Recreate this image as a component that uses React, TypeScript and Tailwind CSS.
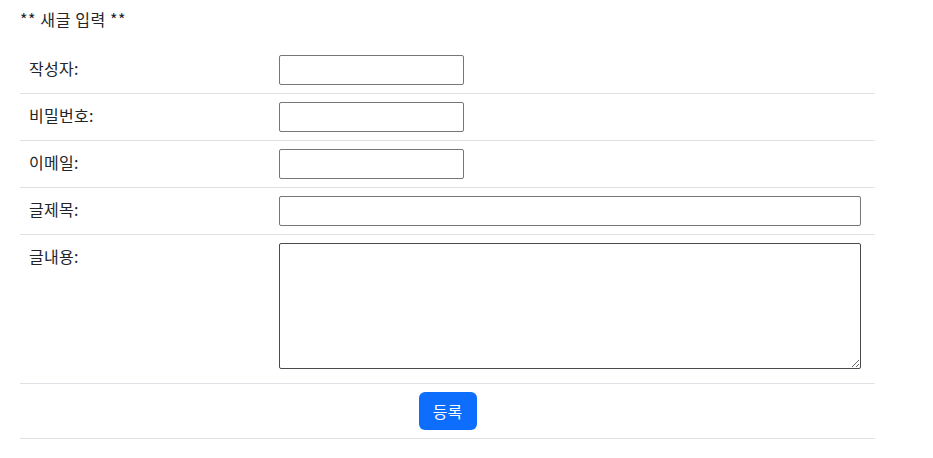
import React from "react";

const font = { fontFamily: '"Noto Sans CJK KR", "Noto Sans", sans-serif' };

type RowProps = {
  label: string;
  children: React.ReactNode;
};

const Row: React.FC<RowProps> = ({ label, children }) => (
  <tr className="border-b border-[#dee2e6]">
    <td className="w-[251px] px-2 py-2 align-top">
      <div className="h-[30px] pl-px leading-[26px] tracking-[0.3px]">{label}</div>
    </td>
    <td className="px-2 py-2 align-top">{children}</td>
  </tr>
);

export default function App() {
  return (
    <div className="px-5 pt-[7px] text-[16px] text-[#212529] bg-white min-h-screen" style={font}>
      <div className="h-6 leading-6 tracking-[0.6px]">** 새글 입력 **</div>

      <table className="mt-[16px] w-[855px] border-collapse">
        <tbody>
          <Row label="작성자:">
            <input type="text" className="block w-[185px] h-[30px] border border-[#767676] rounded-[2px]" />
          </Row>
          <Row label="비밀번호:">
            <input type="password" className="block w-[185px] h-[30px] border border-[#767676] rounded-[2px]" />
          </Row>
          <Row label="이메일:">
            <input type="text" className="block w-[185px] h-[30px] border border-[#767676] rounded-[2px]" />
          </Row>
          <Row label="글제목:">
            <input type="text" className="block w-[582px] h-[30px] border border-[#767676] rounded-[2px]" />
          </Row>
          <tr className="border-b border-[#dee2e6]">
            <td className="w-[251px] px-2 py-2 align-top">
              <div className="pl-px leading-[26px] tracking-[0.3px]">글내용:</div>
            </td>
            <td className="px-2 pt-2 pb-[14px] align-top">
              <textarea className="block w-[582px] h-[126px] border border-[#4a4a4a] rounded-[2px]" />
            </td>
          </tr>
          <tr className="border-b border-[#dee2e6]">
            <td colSpan={2} className="px-2 py-2 text-center">
              <button className="h-[38px] w-[58px] rounded-[6px] bg-[#0d6efd] text-white leading-6">
                등록
              </button>
            </td>
          </tr>
        </tbody>
      </table>
    </div>
  );
}
